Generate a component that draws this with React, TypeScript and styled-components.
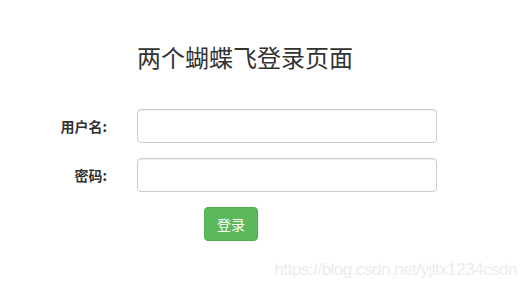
import React from "react";
import styled, { createGlobalStyle } from "styled-components";

const GlobalStyle = createGlobalStyle`
  html, body {
    margin: 0;
    padding: 0;
    background: #ffffff;
  }
  body {
    font-family: "Helvetica Neue", "Liberation Sans", "Noto Sans CJK SC", sans-serif;
    color: #333333;
  }
  * { box-sizing: border-box; }
`;

const Page = styled.div`
  position: relative;
  width: 526px;
  height: 289px;
  overflow: hidden;
  padding-top: 43px;
  display: flex;
  flex-direction: column;
`;

const Title = styled.h3`
  margin: 0 0 0 137px;
  font-family: "Noto Sans CJK SC", sans-serif;
  font-size: 24px;
  line-height: 27px;
  font-weight: 400;
  color: #333333;
`;

const Form = styled.form`
  margin-top: 39px;
  display: grid;
  grid-template-columns: 107px 300px;
  column-gap: 30px;
  row-gap: 15px;
  align-items: center;
`;

const Label = styled.label`
  text-align: right;
  font-family: "Noto Sans CJK SC", sans-serif;
  font-size: 14px;
  font-weight: 700;
  color: #333333;
  line-height: 20px;
`;

const Input = styled.input`
  display: block;
  width: 300px;
  height: 34px;
  padding: 6px 12px;
  font-size: 14px;
  border: 1px solid #cccccc;
  border-radius: 4px;
  background: #ffffff;
  box-shadow: inset 0 1px 1px rgba(0, 0, 0, 0.075);
  outline: none;
`;

const ButtonCell = styled.div`
  grid-column: 2;
  padding-left: 67px;
`;

const SubmitButton = styled.button`
  display: inline-block;
  height: 34px;
  padding: 0 12px;
  font-family: "Noto Sans CJK SC", sans-serif;
  font-size: 14px;
  line-height: 32px;
  color: #ffffff;
  background: #5cb85c;
  border: 1px solid #4cae4c;
  border-radius: 4px;
  cursor: pointer;
`;

const Watermark = styled.div`
  position: absolute;
  right: 9px;
  top: 259px;
  font-family: "Liberation Sans", Arial, sans-serif;
  font-size: 17px;
  letter-spacing: -0.5px;
  line-height: 22px;
  color: #ececec;
  white-space: nowrap;
`;

export default function App() {
  return (
    <>
      <GlobalStyle />
      <Page>
        <Title>两个蝴蝶飞登录页面</Title>
        <Form onSubmit={(e) => e.preventDefault()}>
          <Label htmlFor="username">用户名:</Label>
          <Input id="username" type="text" />
          <Label htmlFor="password">密码:</Label>
          <Input id="password" type="password" />
          <ButtonCell>
            <SubmitButton type="submit">登录</SubmitButton>
          </ButtonCell>
        </Form>
        <Watermark>https://blog.csdn.net/yjltx1234csdn</Watermark>
      </Page>
    </>
  );
}
